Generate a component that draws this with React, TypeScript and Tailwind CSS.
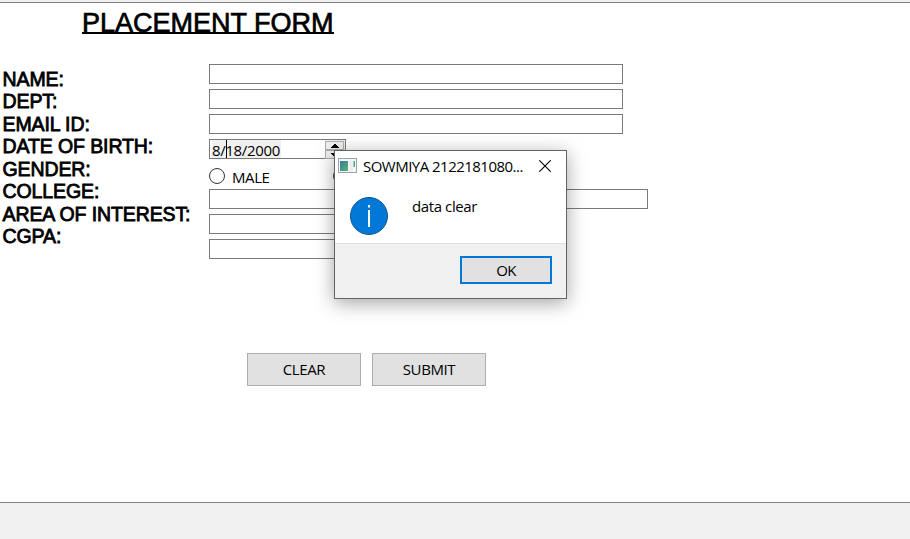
const labels = [
  'NAME:',
  'DEPT:',
  'EMAIL ID:',
  'DATE OF BIRTH:',
  'GENDER:',
  'COLLEGE:',
  'AREA OF INTEREST:',
  'CGPA:',
];

const uiFont = "font-['Open_Sans','Noto_Sans',sans-serif]";

function Field({ width = 'w-[414px]' }: { width?: string }) {
  return <input className={`block h-5 border border-[#7a7a7a] bg-white outline-none ${width}`} />;
}

function DateField() {
  return (
    <div className="flex h-5 w-[137px] border border-[#7a7a7a] bg-white">
      <div className="relative ml-0.5 h-[18px] w-[69px] bg-[#f0f0f0]">
        <span className="block whitespace-nowrap text-[15px] leading-5 tracking-[-0.35px]">8/18/2000</span>
        <span className="absolute left-[14px] top-0 h-[18px] w-px bg-black" />
      </div>
      <div className="ml-auto flex h-[19px] w-5 flex-col bg-[#f0f0f0] pr-px pt-px">
        {[false, true].map((down) => (
          <div key={String(down)} className="flex h-[9px] shrink-0 items-center justify-center border border-[#adadad]">
            <svg width="8" height="4" viewBox="0 0 8 4" className={down ? 'rotate-180' : ''}>
              <path d="M0 4V3H1V2H2V1H3V0H5V1H6V2H7V3H8V4Z" fill="#000" />
            </svg>
          </div>
        ))}
      </div>
    </div>
  );
}

function InfoDialog() {
  return (
    <div className="absolute left-[334px] top-[150px] flex h-[149px] w-[233px] flex-col border border-[#646464] bg-white shadow-[0_4px_18px_rgba(0,0,0,0.36)]">
      <div className="flex h-[30px] shrink-0 items-center pl-[3px]">
        <svg className="mb-px" width="19" height="15" viewBox="0 0 19 15">
          <defs>
            <linearGradient id="app" x1="0" y1="0" x2="1" y2="1">
              <stop offset="0" stopColor="#3979a4" />
              <stop offset="1" stopColor="#58b568" />
            </linearGradient>
          </defs>
          <rect x=".5" y=".5" width="18" height="14" fill="#f5f6f8" stroke="#9aa2aa" />
          <rect x="2" y="3" width="8" height="10" fill="url(#app)" />
          <rect x="11" y="3" width="4" height="10" fill="#eceef2" />
          <rect x="15.500" y="3" width="1.500" height="6" fill="#4ba57c" />
        </svg>
        <span className="ml-1.5 w-[161px] whitespace-nowrap text-[15px] leading-5 tracking-[-0.52px]">SOWMIYA 2122181080...</span>
        <svg className="ml-[15px]" width="12" height="12" viewBox="0 0 12 12">
          <path d="M.3.3 11.700 11.700M11.700.3.3 11.700" stroke="#000" strokeWidth="1.100" />
        </svg>
      </div>
      <div className="flex h-[62px] shrink-0 pl-[15px] pt-4">
        <svg width="38" height="38" viewBox="0 0 38 38">
          <circle cx="19" cy="19" r="18.500" fill="#0078d7" stroke="#0c578f" />
          <path d="M18 8h2v2.500h-2zM18 13h2v17h-2z" fill="#fff" />
        </svg>
        <span className="ml-6 text-[15px] leading-[18px] tracking-[-0.4px]">data clear</span>
      </div>
      <div className="flex flex-1 justify-end border-t border-[#dfdfdf] bg-[#f0f0f0] pr-3.5 pt-3">
        <button className="h-7 w-[92px] border-2 border-[#0078d7] bg-[#e1e1e1] text-[15px] leading-6 tracking-[-0.6px]">OK</button>
      </div>
    </div>
  );
}

export default function App() {
  return (
    <div className={`relative flex h-[539px] w-[910px] flex-col overflow-hidden bg-[#f0f0f0] pt-0.5 text-black ${uiFont}`}>
      <main className="h-[501px] shrink-0 border-y border-[#828282] bg-white">
        <h1 className="ml-[82px] flex h-[61px] pt-1 font-['Liberation_Sans',Arial,sans-serif] text-[27px] leading-8 [-webkit-text-stroke:0.7px_black]">
          <span className="h-[27px] whitespace-nowrap border-b-2 border-black">PLACEMENT FORM</span>
        </h1>
        <div className="flex">
          <div className="w-[209px] shrink-0 pl-[2.500px] pt-[3.500px] font-['Liberation_Sans',Arial,sans-serif] text-[19.500px] leading-[22.500px] tracking-[-0.1px] [-webkit-text-stroke:0.8px_black]">
            {labels.map((text) => (
              <div key={text} className="h-[22.500px] whitespace-nowrap">{text}</div>
            ))}
          </div>
          <div className="flex flex-col gap-[5px]">
            <Field />
            <Field />
            <Field />
            <DateField />
            <div className="flex h-5 items-start">
              <span className="mt-[4px] size-4 rounded-full border border-[#333]" />
              <span className="ml-[7px] mt-[3px] w-[101px] text-[15px] leading-5 tracking-[-0.4px]">MALE</span>
              <span className="mt-[4px] size-4 rounded-full border border-[#333]" />
            </div>
            <Field width="w-[439px]" />
            <Field width="w-[300px]" />
            <Field width="w-[300px]" />
          </div>
        </div>
        <div className="ml-[247px] mt-[94px] flex gap-[11px] text-[15px] tracking-[-0.4px]">
          <button className="h-[33px] w-[114px] border border-[#adadad] bg-[#e1e1e1]">CLEAR</button>
          <button className="h-[33px] w-[114px] border border-[#adadad] bg-[#e1e1e1]">SUBMIT</button>
        </div>
      </main>
      <InfoDialog />
    </div>
  );
}
